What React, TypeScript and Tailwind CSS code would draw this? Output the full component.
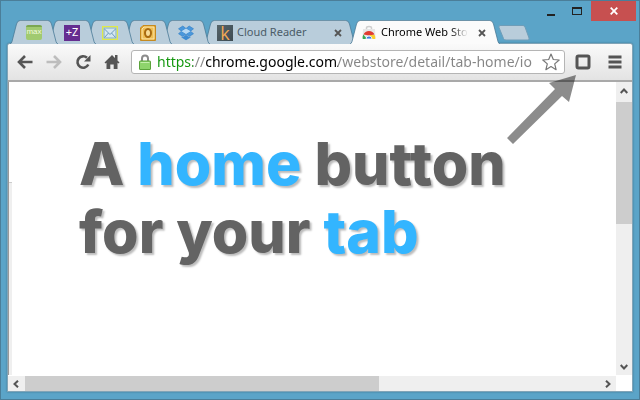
import type { ReactNode } from "react";

type Tone = "idle" | "active";

const fills = {
  idle: "#b9cddb",
  active: "#fbfbfb",
};

function TabCap({ tone, side }: { tone: Tone; side: "left" | "right" }) {
  return (
    <svg
      viewBox="0 0 10 24"
      className={`h-6 w-2.5 shrink-0 ${side === "right" ? "-scale-x-100" : ""}`}
      aria-hidden
    >
      <path d="M0 24Q1.500 23.500 2 21.500L6.500 4Q7.500 .5 10 .5V24Z" fill={fills[tone]} />
      <path
        d="M0 24Q1.500 23.500 2 21.500L6.500 4Q7.500 .5 10 .5"
        fill="none"
        stroke="#4a7b97"
        strokeOpacity=".8"
      />
    </svg>
  );
}

function Tab({
  tone = "idle",
  label,
  className = "",
  children,
}: {
  tone?: Tone;
  label: string;
  className?: string;
  children: ReactNode;
}) {
  return (
    <button
      type="button"
      role="tab"
      aria-label={label}
      aria-selected={tone === "active"}
      className={`relative flex h-6 items-stretch font-['Noto_Sans',sans-serif] text-[11px] ${className}`}
    >
      <TabCap tone={tone} side="left" />
      <span
        className={`flex min-w-0 grow items-center border-t border-[#6d93a9] ${
          tone === "active" ? "bg-[#fbfbfb]" : "bg-[#b9cddb]"
        }`}
      >
        {children}
      </span>
      <TabCap tone={tone} side="right" />
    </button>
  );
}

function CloseMark() {
  return (
    <svg viewBox="0 0 8 8" className="ml-auto size-2 shrink-0" aria-hidden>
      <path d="M1 1L7 7M7 1L1 7" stroke="#555" strokeWidth="1.800" />
    </svg>
  );
}

function MailIcon() {
  return (
    <svg viewBox="0 0 16 14" className="mx-auto h-3.5 w-4" aria-hidden>
      <rect x=".75" y=".75" width="14.500" height="12.500" fill="#f4f8f2" stroke="#dfe94a" strokeWidth="1.500" />
      <rect x="2" y="2" width="12" height="10" fill="#d4e6f2" stroke="#7fa9c6" />
      <path d="M2.500 3L8 8.500L13.500 3M2.500 11.500L6.500 7M13.500 11.500L9.500 7" fill="none" stroke="#6e9cbd" />
    </svg>
  );
}

function OutlookIcon() {
  return (
    <svg viewBox="0 0 16 16" className="mx-auto size-4" aria-hidden>
      <path d="M3 .5H15.500V15.500H.5V3Z" fill="#e3a52c" stroke="#c58a20" />
      <path d="M4 2H14V14H2V4Z" fill="#efbf55" stroke="#fbe6ae" />
      <ellipse cx="8" cy="8" rx="3" ry="4" fill="#f7dc98" stroke="#a86a10" strokeWidth="2" />
    </svg>
  );
}

function DropboxIcon() {
  return (
    <svg viewBox="0 0 16 16" className="mx-auto size-4" aria-hidden>
      <path d="M4.800 1L8 3.500L3.500 6.200L.5 3.800Z" fill="#4a98dc" stroke="#2f7cc4" strokeWidth=".6" />
      <path d="M11.200 1L8 3.500L12.500 6.200L15.500 3.800Z" fill="#4a98dc" stroke="#2f7cc4" strokeWidth=".6" />
      <path d="M3.500 6.200L8 9L4.800 11.500L.5 8.700Z" fill="#4a98dc" stroke="#2f7cc4" strokeWidth=".6" />
      <path d="M12.500 6.200L8 9L11.200 11.500L15.500 8.700Z" fill="#4a98dc" stroke="#2f7cc4" strokeWidth=".6" />
      <path d="M8 3.500L12.500 6.200L8 9L3.500 6.200Z" fill="#b7d9f4" />
      <path d="M3.500 11.500L4.800 12.300L8 9.800L11.200 12.300L12.500 11.500V12.600L8 15.300L3.500 12.600Z" fill="#3d8bd2" />
    </svg>
  );
}

function StoreIcon() {
  return (
    <svg viewBox="0 0 14 16" className="ml-0.5 h-4 w-3.5 shrink-0" aria-hidden>
      <path d="M4.500 5V3Q4.500 1.500 7 1.500T9.500 3V5" fill="none" stroke="#cfcfcf" strokeWidth="1.500" />
      <path d="M1 4H13L13.500 14H.5Z" fill="#e6e6e6" />
      <path d="M1.500 9.500A6 6 0 0 1 12.500 9.500L7 10.500Z" fill="#e03c31" />
      <path d="M1.300 9.500L5 14H.8Q.3 11.500 1.300 9.500Z" fill="#35a853" />
      <path d="M8 10H12.700Q13.700 12 13.200 14H8Z" fill="#f9cf30" />
      <path d="M4 14A3 3 0 0 1 10 14Z" fill="#3c7fe0" stroke="#fff" strokeWidth=".8" />
    </svg>
  );
}

function TabStrip() {
  return (
    <div role="tablist" aria-label="Open tabs" className="isolate -mt-px flex items-end pl-[9px]">
      <Tab label="max" className="z-50 w-12">
        <span className="mx-auto rounded-xs border-t-2 border-[#7ba651] bg-[#a1ca70] pb-1 font-['Liberation_Sans',sans-serif] text-[8px] leading-[9px] text-[#f2fadf]">
          max
        </span>
      </Tab>
      <Tab label="+Z" className="z-40 -ml-2.5 w-12">
        <span className="mx-auto flex size-4 shrink-0 items-center justify-center bg-[#652d90] text-[11px] text-white">
          +Z
        </span>
      </Tab>
      <Tab label="Mail" className="z-30 -ml-2.5 w-12">
        <MailIcon />
      </Tab>
      <Tab label="Outlook" className="z-20 -ml-2.5 w-12">
        <OutlookIcon />
      </Tab>
      <Tab label="Dropbox" className="z-10 -ml-2.5 w-12">
        <DropboxIcon />
      </Tab>
      <Tab label="Cloud Reader" className="-ml-1.5 w-[152px] text-[#4b5c68]">
        <span className="mr-1 ml-[3px] flex size-4 items-center justify-center bg-linear-to-br from-[#56646a] to-[#3d4b52] font-['Open_Sans',sans-serif] text-lg leading-4 text-[#f0a854]">
          k
        </span>
        Cloud Reader
        <CloseMark />
        <span className="w-1" />
      </Tab>
      <Tab tone="active" label="Chrome Web Store" className="z-60 -ml-1.5 w-[150px] text-black">
        <StoreIcon />
        <span className="ml-[5px] whitespace-nowrap mask-r-from-80%">Chrome Web Sto</span>
        <CloseMark />
        <span className="w-1" />
      </Tab>
      <button type="button" aria-label="New tab" className="mt-0.5 -ml-0.5 self-center">
        <svg viewBox="0 0 32 16" className="h-4 w-8" aria-hidden>
          <path
            d="M2 .5H25Q26.500 .5 27 2L31 13Q31.500 15 30 15H8Q6 15 5.500 13.500L1 2.500Q.5 .5 2 .5Z"
            fill="#b9cddb"
            stroke="#6f9db8"
          />
        </svg>
      </button>
    </div>
  );
}

function WindowControls() {
  return (
    <div className="flex h-5 justify-end pr-[3px]">
      <button type="button" aria-label="Minimize" className="flex w-7 items-center justify-center">
        <svg viewBox="0 0 8 12" className="h-3 w-2" aria-hidden>
          <path d="M0 9H8V11H0Z" fill="#222" />
        </svg>
      </button>
      <button type="button" aria-label="Maximize" className="flex w-6 items-center justify-center">
        <svg viewBox="0 0 10 8" className="h-2 w-2.5" aria-hidden>
          <path d="M0 0H10V8H0ZM1 2V7H9V2Z" fill="#222" fillRule="evenodd" />
        </svg>
      </button>
      <button
        type="button"
        aria-label="Close"
        className="ml-0.5 flex w-[45px] items-center justify-center bg-[#c75050]"
      >
        <svg viewBox="0 0 8 8" className="size-2" aria-hidden>
          <path d="M.7 .7L7.300 7.300M7.300 .7L.7 7.300" stroke="#fff" strokeWidth="1.800" />
        </svg>
      </button>
    </div>
  );
}

function ToolButton({ label, children }: { label: string; children: ReactNode }) {
  return (
    <button type="button" aria-label={label} className="shrink-0">
      <svg viewBox="0 0 16 16" className="size-4" fill="none" stroke="#555" aria-hidden>
        {children}
      </svg>
    </button>
  );
}

function Toolbar() {
  return (
    <div className="flex h-[38px] items-center rounded-t-[3px] border-b-2 border-[#a9a9a9] bg-linear-to-b from-[#fafafa] to-[#e3e3e3] px-[9px]">
      <div className="flex gap-[13px]">
        <ToolButton label="Back">
          <path d="M15.500 8H2.500M8 2L2 8L8 14" strokeWidth="2.600" />
        </ToolButton>
        <ToolButton label="Forward">
          <path d="M.5 8H13.500M8 2L14 8L8 14" stroke="#bdbdbd" strokeWidth="2.600" />
        </ToolButton>
        <ToolButton label="Reload">
          <path d="M12 3.800A5.700 5.700 0 1 0 13.300 10.500" strokeWidth="2.600" />
          <path d="M15.500 1V7.500H9Z" fill="#555" stroke="none" />
        </ToolButton>
        <ToolButton label="Home">
          <path
            d="M8 1L11 4V1H13.500V6.500L15.500 8.500L14.500 9.500L13.500 8.700V15H9.700V10.500H6.300V15H2.500V8.700L1.500 9.500L.5 8.500Z"
            fill="#555"
            stroke="none"
          />
        </ToolButton>
      </div>

      <div className="ml-[11px] flex h-6 min-w-0 grow items-center rounded-[3px] border border-[#b5b5b5] bg-white pr-1 pl-[7px]">
        <svg viewBox="0 0 12 16" className="h-4 w-3 shrink-0" aria-hidden>
          <path d="M3 8V4.500Q3 1.500 6 1.500T9 4.500V8" fill="none" stroke="#8b8b8b" strokeWidth="2" />
          <rect x=".5" y="7" width="11" height="8.500" rx=".5" fill="#8ed46c" stroke="#5ba33b" />
          <path d="M1.500 8.500H10.500" stroke="#c5efae" />
        </svg>
        <input
          type="text"
          aria-label="Address"
          defaultValue="https://chrome.google.com/webstore/detail/tab-home/io"
          className="ml-1.5 min-w-0 grow bg-[linear-gradient(90deg,#12960c_0_36px,#858585_36px_49px,#000_49px_181px,#858585_181px)] bg-clip-text font-['Noto_Sans',sans-serif] text-[14px] leading-5 text-transparent outline-none"
        />
        <button type="button" aria-label="Bookmark this page" className="shrink-0">
          <svg viewBox="0 0 18 18" className="size-[18px]" aria-hidden>
            <path
              d="M9 1L11.300 6.500L17.200 7L12.700 10.900L14.100 16.700L9 13.600L3.900 16.700L5.300 10.900L.8 7L6.700 6.500Z"
              fill="#fff"
              stroke="#777"
              strokeWidth="1.200"
              strokeLinejoin="round"
            />
          </svg>
        </button>
      </div>

      <div className="ml-2.5 flex gap-4">
        <ToolButton label="Tab Home">
          <rect x="2" y="2" width="12" height="12" rx="1.500" strokeWidth="3" />
        </ToolButton>
        <ToolButton label="Menu">
          <path d="M1.500 3H14.500M1.500 8H14.500M1.500 13H14.500" strokeWidth="2.800" />
        </ToolButton>
      </div>
    </div>
  );
}

function Chevron({ d }: { d: string }) {
  return (
    <svg viewBox="0 0 8 8" className="size-2 shrink-0" aria-hidden>
      <path d={d} fill="none" stroke="#555" strokeWidth="2" />
    </svg>
  );
}

export default function App() {
  return (
    <main className="relative flex min-h-screen flex-col border border-[#4b7e99] bg-[#5ba4c8]">
      <WindowControls />
      <TabStrip />

      <div className="mx-1.5 -mt-px mb-[7px] flex grow flex-col rounded-t-[3px] border border-[#4b7e99]/70 bg-white shadow-[0_0_2px_#3b6f8b]">
        <Toolbar />

        <div className="flex grow">
          <div className="flex w-1 flex-col border-l border-[#999]">
            <div className="h-[100px]" />
            <div className="grow border-t border-[#ccc] bg-[#efefef]" />
          </div>

          <section className="grow pt-12 pl-[67px]">
            <h1 className="font-['Inter',sans-serif] text-[59px] leading-[68px] font-extrabold text-[#636363] text-shadow-[2px_2px_2px_#0004]">
              A <span className="text-[#33b5ff]">home</span> button
              <br />
              for your <span className="text-[#33b5ff]">tab</span>
            </h1>
          </section>

          <div className="flex w-4 flex-col items-center bg-[#efefef] pt-[5px] pb-1">
            <Chevron d="M.7 6L4 2.500L7.300 6" />
            <div className="mt-[7px] h-[122px] w-full bg-[#cdcdcd]" />
            <div className="grow" />
            <Chevron d="M.7 2L4 5.500L7.300 2" />
          </div>
        </div>

        <div className="mt-px flex h-[15px]">
          <div className="flex grow items-center bg-[#efefef] pr-1 pl-1">
            <Chevron d="M6 .7L2.500 4L6 7.300" />
            <div className="ml-[5px] h-full w-[59%] bg-[#cdcdcd]" />
            <div className="grow" />
            <Chevron d="M2 .7L5.500 4L2 7.300" />
          </div>
          <div className="w-4" />
        </div>
      </div>

      {/* points at the extension's button in the toolbar */}
      <svg viewBox="0 0 70 70" className="absolute top-[74px] right-[62px] size-[70px]" aria-hidden>
        <path d="M69 0L42 8L48 14L0 63L6 69L55 21L62 27Z" fill="#000" fillOpacity=".45" />
      </svg>
    </main>
  );
}
